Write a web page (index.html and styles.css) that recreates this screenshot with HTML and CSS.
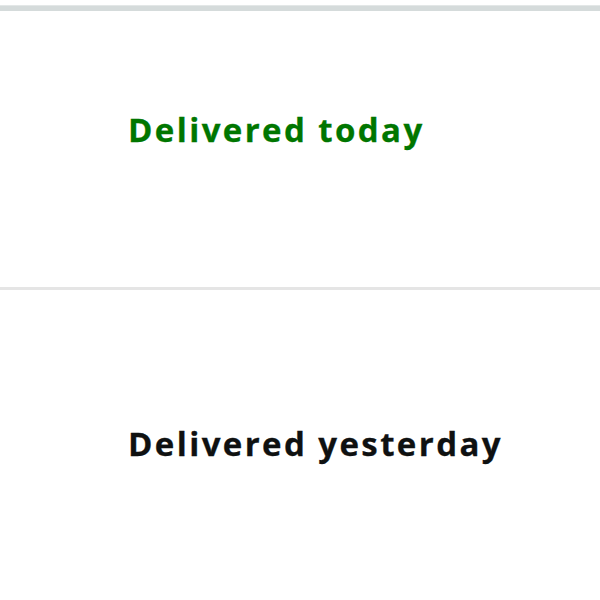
FILE: index.html
```html
<!DOCTYPE html>
<html><head><link rel="stylesheet" href="styles.css"></head>
<body>
<div class="topbar"></div>
<section class="card card-first">
  <h2 class="status status-today">Delivered today</h2>
</section>
<section class="card card-second">
  <h2 class="status status-past">Delivered yesterday</h2>
</section>
</body></html>
```
FILE: styles.css
```css
html,body{margin:0;padding:0;background:#fff;}
body{font-family:"Open Sans","Noto Sans",sans-serif;}
.topbar{margin-top:5px;height:6px;background:#d5dbdb;border-top:1px solid #e3e7e7;box-sizing:border-box;}
.card{padding-left:128px;box-sizing:border-box;}
.card-first{height:276px;padding-top:99px;}
.card-second{border-top:3px solid #e5e5e5;padding-top:134px;height:313px;}
.status{margin:0;font-size:33px;font-weight:700;line-height:40px;letter-spacing:2.4px;-webkit-text-stroke:0.3px currentColor;}
.status-today{color:#007600;}
.status-past{color:#0f1111;}
```
